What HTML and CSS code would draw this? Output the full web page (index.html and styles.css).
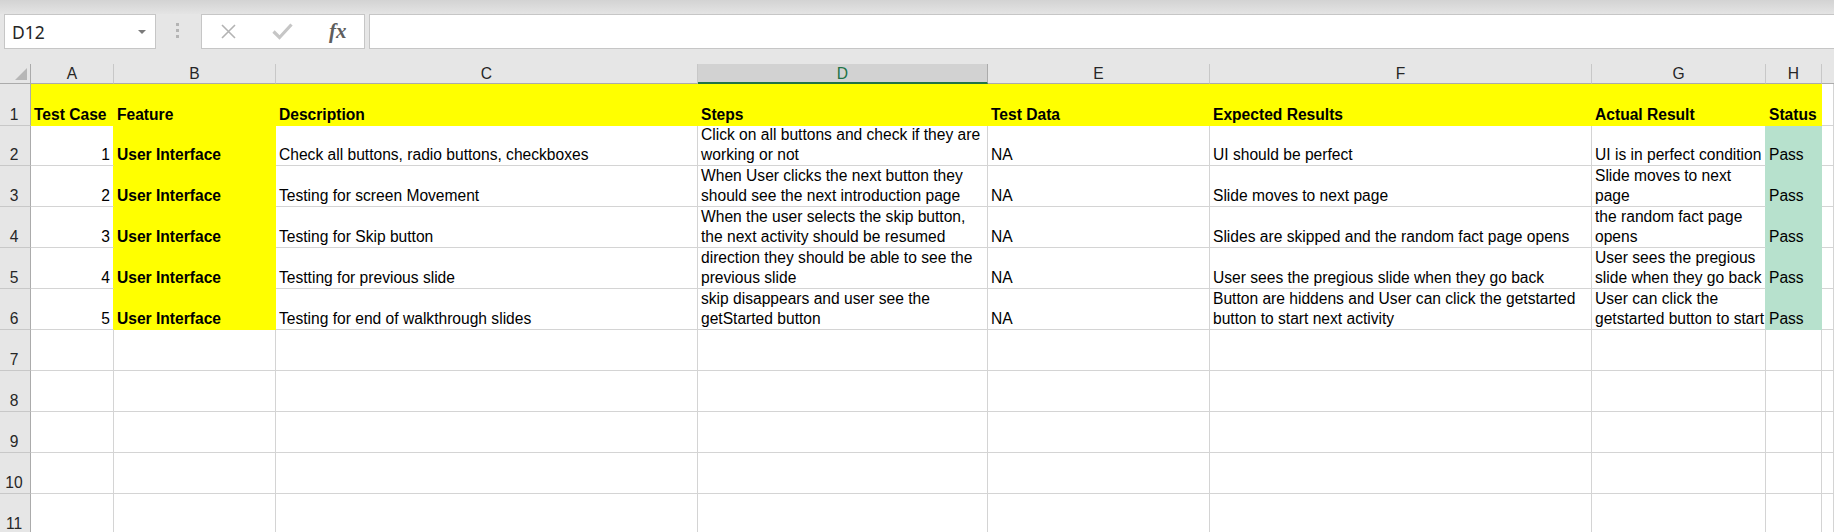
FILE: index.html
```html
<!DOCTYPE html>
<html>
<head>
<meta charset="utf-8">
<link rel="stylesheet" href="styles.css">
</head>
<body>
<div class="app">
  <div class="topshade"></div>
  <div class="fbar">
    <div class="namebox"><span class="nametext">D12</span><span class="caret"></span></div>
    <div class="dots"><i></i><i></i><i></i></div>
    <div class="fbtns">
      <svg class="ic-x" width="17" height="15" viewBox="0 0 17 15"><path d="M2 1 L15 14 M15 1 L2 14" stroke="#b3b3b3" stroke-width="1.6" fill="none"/></svg>
      <svg class="ic-ok" width="21" height="17" viewBox="0 0 21 17"><path d="M1.5 8.5 L7.5 14.5 L19.5 1.5" stroke="#c6c6c6" stroke-width="3.2" fill="none"/></svg>
      <span class="fx">fx</span>
    </div>
    <div class="finput"></div>
  </div>
  <div class="sheet">
    <!-- header row -->
    <div class="corner"><svg width="30" height="19" viewBox="0 0 30 19"><polygon points="15,16 27,16 27,4" fill="#b7b7b7"/></svg></div>
    <div class="ch">A</div>
    <div class="ch">B</div>
    <div class="ch">C</div>
    <div class="ch sel">D</div>
    <div class="ch">E</div>
    <div class="ch">F</div>
    <div class="ch">G</div>
    <div class="ch">H</div>
    <div class="ch last"></div>

    <!-- row 1 -->
    <div class="rh">1</div>
    <div class="c y b">Test Case</div>
    <div class="c y b">Feature</div>
    <div class="c y b">Description</div>
    <div class="c y b">Steps</div>
    <div class="c y b">Test Data</div>
    <div class="c y b">Expected Results</div>
    <div class="c y b">Actual Result</div>
    <div class="c y b">Status</div>
    <div class="c"></div>

    <!-- row 2 -->
    <div class="rh">2</div>
    <div class="c num ry">1</div>
    <div class="c y b">User Interface</div>
    <div class="c">Check all buttons, radio buttons, checkboxes</div>
    <div class="c">Click on all buttons and check if they are<br>working or not</div>
    <div class="c">NA</div>
    <div class="c">UI should be perfect</div>
    <div class="c rg">UI is in perfect condition</div>
    <div class="c g">Pass</div>
    <div class="c"></div>

    <!-- row 3 -->
    <div class="rh">3</div>
    <div class="c num ry">2</div>
    <div class="c y b">User Interface</div>
    <div class="c">Testing for screen Movement</div>
    <div class="c">When User clicks the next button they<br>should see the next introduction page</div>
    <div class="c">NA</div>
    <div class="c">Slide moves to next page</div>
    <div class="c rg">Slide moves to next<br>page</div>
    <div class="c g">Pass</div>
    <div class="c"></div>

    <!-- row 4 -->
    <div class="rh">4</div>
    <div class="c num ry">3</div>
    <div class="c y b">User Interface</div>
    <div class="c">Testing for Skip button</div>
    <div class="c">When the user selects the skip button,<br>the next activity should be resumed</div>
    <div class="c">NA</div>
    <div class="c">Slides are skipped and the random fact page opens</div>
    <div class="c rg">the random fact page<br>opens</div>
    <div class="c g">Pass</div>
    <div class="c"></div>

    <!-- row 5 -->
    <div class="rh">5</div>
    <div class="c num ry">4</div>
    <div class="c y b">User Interface</div>
    <div class="c">Testting for previous slide</div>
    <div class="c">direction they should be able to see the<br>previous slide</div>
    <div class="c">NA</div>
    <div class="c">User sees the pregious slide when they go back</div>
    <div class="c rg">User sees the pregious<br>slide when they go back</div>
    <div class="c g">Pass</div>
    <div class="c"></div>

    <!-- row 6 -->
    <div class="rh">6</div>
    <div class="c num ry">5</div>
    <div class="c y b">User Interface</div>
    <div class="c">Testing for end of walkthrough slides</div>
    <div class="c">skip disappears and user see the<br>getStarted button</div>
    <div class="c">NA</div>
    <div class="c">Button are hiddens and User can click the getstarted<br>button to start next activity</div>
    <div class="c rg">User can click the<br>getstarted button to start</div>
    <div class="c g">Pass</div>
    <div class="c"></div>

    <!-- rows 7-11 -->
    <div class="rh">7</div>
    <div class="c"></div><div class="c"></div><div class="c"></div><div class="c"></div><div class="c"></div><div class="c"></div><div class="c"></div><div class="c"></div><div class="c"></div>
    <div class="rh">8</div>
    <div class="c"></div><div class="c"></div><div class="c"></div><div class="c"></div><div class="c"></div><div class="c"></div><div class="c"></div><div class="c"></div><div class="c"></div>
    <div class="rh">9</div>
    <div class="c"></div><div class="c"></div><div class="c"></div><div class="c"></div><div class="c"></div><div class="c"></div><div class="c"></div><div class="c"></div><div class="c"></div>
    <div class="rh">10</div>
    <div class="c"></div><div class="c"></div><div class="c"></div><div class="c"></div><div class="c"></div><div class="c"></div><div class="c"></div><div class="c"></div><div class="c"></div>
    <div class="rh">11</div>
    <div class="c"></div><div class="c"></div><div class="c"></div><div class="c"></div><div class="c"></div><div class="c"></div><div class="c"></div><div class="c"></div><div class="c"></div>
  </div>
</div>
</body>
</html>
```
FILE: styles.css
```css
* { box-sizing: border-box; }
html, body {
  margin: 0;
  padding: 0;
  background: #ffffff;
  overflow: hidden;
}
.app {
  width: 1834px;
  height: 532px;
  overflow: hidden;
  background: #e6e6e6;
  font-family: "Liberation Sans", Arial, sans-serif;
}
.topshade {
  height: 14px;
  background: linear-gradient(#d3d3d3, #e4e4e4);
}
.fbar {
  height: 50px;
  display: flex;
  align-items: flex-start;
  padding-left: 4px;
  background: #e6e6e6;
}
.namebox {
  width: 152px;
  height: 35px;
  background: #ffffff;
  border: 1px solid #c6c6c6;
  display: flex;
  align-items: center;
  padding: 1px 0 0 7px;
}
.nametext {
  font-family: "Noto Sans", "Open Sans", sans-serif;
  font-size: 17.5px;
  color: #262626;
}
.caret {
  margin-left: auto;
  margin-right: 9px;
  margin-top: -1px;
  width: 0;
  height: 0;
  border-left: 4px solid transparent;
  border-right: 4px solid transparent;
  border-top: 4px solid #7a7a7a;
}
.dots {
  margin-left: 20px;
  margin-top: 9px;
  display: flex;
  flex-direction: column;
  gap: 3px;
}
.dots i {
  display: block;
  width: 3px;
  height: 3px;
  background: #b4b4b4;
}
.fbtns {
  margin-left: 22px;
  width: 164px;
  height: 35px;
  background: #ffffff;
  border: 1px solid #c6c6c6;
  display: flex;
  align-items: center;
}
.ic-x { margin-left: 18px; display: block; }
.ic-ok { margin-left: 35px; display: block; }
.fx {
  margin-left: 36px;
  font-family: "Liberation Serif", "Times New Roman", serif;
  font-style: italic;
  font-weight: bold;
  font-size: 21px;
  color: #5e5e5e;
  line-height: 20px;
  margin-top: -1px;
}
.finput {
  margin-left: 4px;
  flex: 1;
  height: 35px;
  background: #ffffff;
  border: 1px solid #c6c6c6;
  border-right: none;
}
.sheet {
  display: grid;
  grid-template-columns: 31px 83px 162px 422px 290px 222px 382px 174px 56px 1fr;
  grid-template-rows: 20px 42px 40px repeat(9, 41px);
  background: #ffffff;
  font-size: 15.6px;
  color: #000000;
}
.corner {
  background: #e6e6e6;
  border-right: 1px solid #ababab;
  border-bottom: 1px solid #ababab;
}
.corner svg { display: block; }
.ch {
  background: #e6e6e6;
  border-right: 1px solid #c8c8c8;
  border-bottom: 1px solid #ababab;
  display: flex;
  justify-content: center;
  align-items: flex-end;
  line-height: 18px;
  color: #262626;
}
.ch.sel {
  background: #d2d2d2;
  color: #217346;
  border-bottom: 2px solid #217346;
  border-right-color: #ababab;
  line-height: 17px;
}
.ch.last { border-right: none; }
.rh {
  background: #e6e6e6;
  border-right: 1px solid #ababab;
  border-bottom: 1px solid #c8c8c8;
  display: flex;
  justify-content: center;
  align-items: flex-end;
  line-height: 20px;
  padding-right: 2px;
  color: #262626;
}
.c {
  border-right: 1px solid #d4d4d4;
  border-bottom: 1px solid #d4d4d4;
  padding: 0 3px;
  display: flex;
  flex-direction: column;
  justify-content: flex-end;
  line-height: 20px;
  white-space: nowrap;
  overflow: hidden;
}
.c.num { text-align: right; align-items: flex-end; }
.c.y {
  background: #ffff00;
  border-color: #ffff00;
}
.c.b { font-weight: bold; }
.c.g {
  background: #b7e1cd;
  border-color: #b7e1cd;
}
.c.ry { border-right-color: #ffff00; }
.c.rg { border-right-color: #b7e1cd; }
```
